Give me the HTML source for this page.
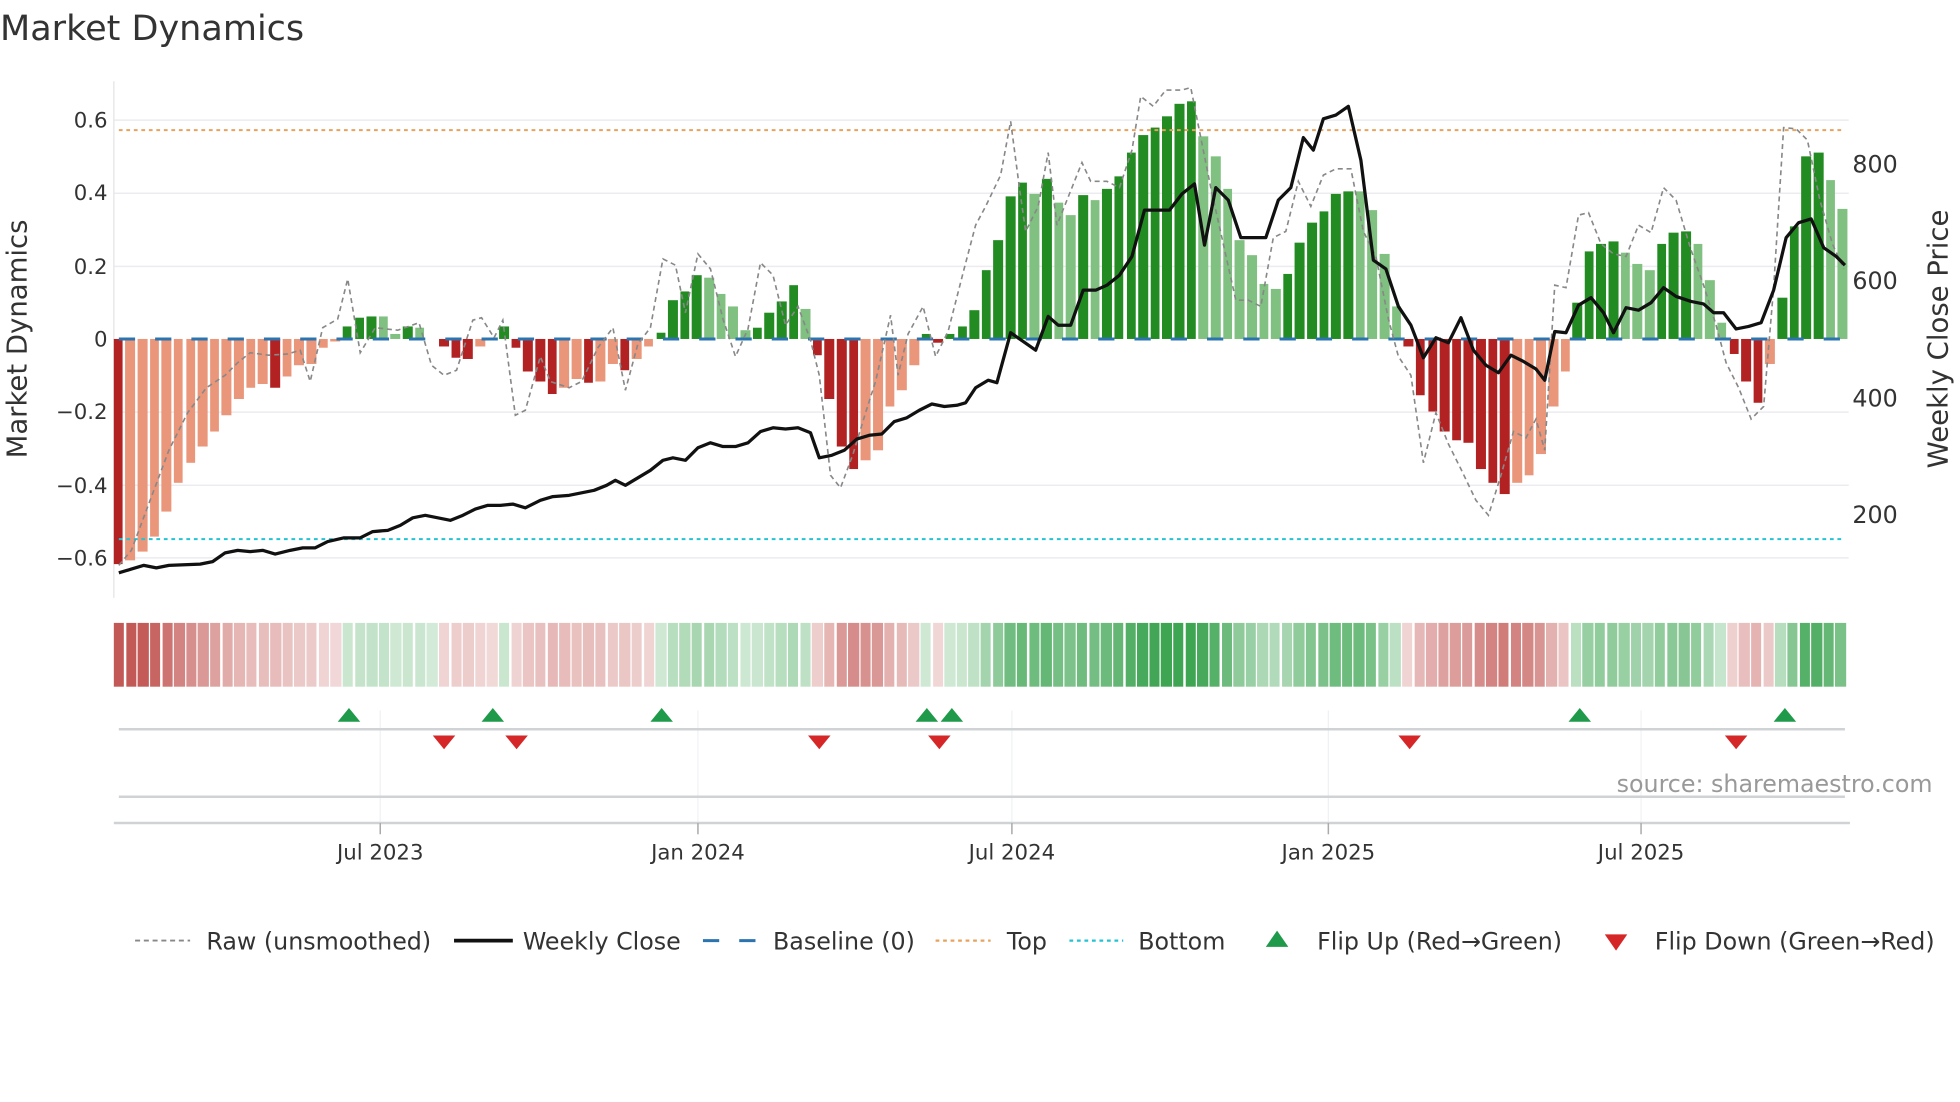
<!DOCTYPE html>
<html><head><meta charset="utf-8"><style>
html,body{margin:0;padding:0;background:#fff;overflow:hidden;width:1960px;height:1102px}
#w{position:absolute;left:0;top:0;width:1567px;height:881px;transform:scale(1.2508);transform-origin:0 0}
svg{position:absolute;left:0;top:0;display:block}
text{font-family:"DejaVu Sans","Liberation Sans",sans-serif;fill:#333}
#bars{position:absolute;left:90.7px;top:0;width:1400px;display:flex;align-items:flex-start}
#bars b{flex:none;display:block;width:7.6px;margin-right:2.047px;height:calc(var(--v)*291.7px)}
#bars b.R,#bars b.r{margin-top:271px}
#bars b.G,#bars b.g{margin-top:calc(271px - var(--v)*291.7px)}
.R{background:#b22222}.r{background:#e9967a}.G{background:#228b22}.g{background:#80c080}
#heat{position:absolute;left:91px;top:498px;width:1400px;height:51px;display:flex}
#heat b{flex:none;display:block;width:8.44px;margin-right:1.2px;height:51px;opacity:min(0.95,calc(0.22 + var(--v)*1.23))}
#heat b.R,#heat b.r{background:rgb(192,80,77)}
#heat b.G,#heat b.g{background:rgb(52,160,74)}
</style></head><body><div id="w">
<svg width="1567" height="881" viewBox="0 0 1567 881">
<text x="0" y="32" font-size="28">Market Dynamics</text>
<g stroke="#ececf0" stroke-width="1.2">
<line x1="91" x2="1478" y1="96" y2="96"/><line x1="91" x2="1478" y1="154.5" y2="154.5"/><line x1="91" x2="1478" y1="213" y2="213"/>
<line x1="91" x2="1478" y1="329.5" y2="329.5"/><line x1="91" x2="1478" y1="388" y2="388"/><line x1="91" x2="1478" y1="446" y2="446"/>
</g>
<line x1="91" x2="91" y1="65" y2="478" stroke="#e4e4e4" stroke-width="1"/>
<g font-size="17" text-anchor="end">
<text x="86" y="102">0.6</text><text x="86" y="160">0.4</text><text x="86" y="219">0.2</text><text x="86" y="277">0</text>
<text x="86" y="335">−0.2</text><text x="86" y="394">−0.4</text><text x="86" y="452">−0.6</text>
</g>
<g font-size="19">
<text x="1481" y="138">800</text><text x="1481" y="231">600</text><text x="1481" y="325">400</text><text x="1481" y="418">200</text>
</g>
<text transform="translate(21,271) rotate(-90)" text-anchor="middle" font-size="22">Market Dynamics</text>
<text transform="translate(1557,271) rotate(-90)" text-anchor="middle" font-size="22">Weekly Close Price</text>
<g stroke="#eef2f4" stroke-width="1">
<line x1="304" x2="304" y1="568" y2="658"/><line x1="558" x2="558" y1="568" y2="658"/><line x1="809" x2="809" y1="568" y2="658"/><line x1="1062" x2="1062" y1="568" y2="658"/><line x1="1312" x2="1312" y1="568" y2="658"/>
</g>
<line x1="95" x2="1475" y1="583" y2="583" stroke="#cfd3d6" stroke-width="2"/>
<line x1="95" x2="1475" y1="637" y2="637" stroke="#cfd3d6" stroke-width="2"/>
<line x1="91" x2="1479" y1="658" y2="658" stroke="#cfd3d6" stroke-width="2"/>
<g stroke="#aaa" stroke-width="1.2">
<line x1="304" x2="304" y1="658" y2="667"/><line x1="558" x2="558" y1="658" y2="667"/><line x1="809" x2="809" y1="658" y2="667"/><line x1="1062" x2="1062" y1="658" y2="667"/><line x1="1312" x2="1312" y1="658" y2="667"/>
</g>
<g font-size="17" text-anchor="middle">
<text x="304" y="687">Jul 2023</text><text x="558" y="687">Jan 2024</text><text x="809" y="687">Jul 2024</text><text x="1062" y="687">Jan 2025</text><text x="1312" y="687">Jul 2025</text>
</g>
<g fill="#1e9a4a"><polygon points="270,577 288,577 279,566"/><polygon points="385,577 403,577 394,566"/><polygon points="520,577 538,577 529,566"/><polygon points="732,577 750,577 741,566"/><polygon points="752,577 770,577 761,566"/><polygon points="1254,577 1272,577 1263,566"/><polygon points="1418,577 1436,577 1427,566"/></g>
<g fill="#d62728"><polygon points="346,588 364,588 355,599"/><polygon points="404,588 422,588 413,599"/><polygon points="646,588 664,588 655,599"/><polygon points="742,588 760,588 751,599"/><polygon points="1118,588 1136,588 1127,599"/><polygon points="1379,588 1397,588 1388,599"/></g>
<text x="1545" y="633" text-anchor="end" font-size="19" style="fill:#999">source: sharemaestro.com</text>
<g font-size="19">
<line x1="108" x2="152" y1="752" y2="752" stroke="#888" stroke-width="1.5" stroke-dasharray="4,3"/>
<text x="165" y="759">Raw (unsmoothed)</text>
<line x1="363" x2="410" y1="752" y2="752" stroke="#111" stroke-width="3"/>
<text x="418" y="759">Weekly Close</text>
<line x1="562" x2="605" y1="752" y2="752" stroke="#2b74b0" stroke-width="2.4" stroke-dasharray="13,16"/>
<text x="618" y="759">Baseline (0)</text>
<line x1="748" x2="792" y1="752" y2="752" stroke="#e8a25e" stroke-width="1.8" stroke-dasharray="3,3"/>
<text x="805" y="759">Top</text>
<line x1="855" x2="898" y1="752" y2="752" stroke="#22c3d3" stroke-width="1.8" stroke-dasharray="3,3"/>
<text x="910" y="759">Bottom</text>
<polygon points="1012,757 1030,757 1021,744" fill="#1e9a4a"/>
<text x="1053" y="759">Flip Up (Red→Green)</text>
<polygon points="1283,747 1301,747 1292,760" fill="#d62728"/>
<text x="1323" y="759">Flip Down (Green→Red)</text>
</g>
</svg>
<div id="bars"><b class="R" style="--v:.617"></b><b class="r" style="--v:.608"></b><b class="r" style="--v:.584"></b><b class="r" style="--v:.54"></b><b class="r" style="--v:.473"></b><b class="r" style="--v:.395"></b><b class="r" style="--v:.34"></b><b class="r" style="--v:.296"></b><b class="r" style="--v:.254"></b><b class="r" style="--v:.209"></b><b class="r" style="--v:.163"></b><b class="r" style="--v:.134"></b><b class="r" style="--v:.124"></b><b class="R" style="--v:.134"></b><b class="r" style="--v:.102"></b><b class="r" style="--v:.072"></b><b class="r" style="--v:.067"></b><b class="r" style="--v:.023"></b><b class="r" style="--v:.007"></b><b class="G" style="--v:.035"></b><b class="G" style="--v:.057"></b><b class="G" style="--v:.062"></b><b class="g" style="--v:.06"></b><b class="g" style="--v:.015"></b><b class="G" style="--v:.035"></b><b class="g" style="--v:.03"></b><b class="g" style="--v:0"></b><b class="R" style="--v:.022"></b><b class="R" style="--v:.05"></b><b class="R" style="--v:.055"></b><b class="r" style="--v:.02"></b><b class="r" style="--v:0"></b><b class="G" style="--v:.035"></b><b class="R" style="--v:.025"></b><b class="R" style="--v:.09"></b><b class="R" style="--v:.115"></b><b class="R" style="--v:.15"></b><b class="r" style="--v:.135"></b><b class="r" style="--v:.11"></b><b class="R" style="--v:.12"></b><b class="r" style="--v:.115"></b><b class="r" style="--v:.07"></b><b class="R" style="--v:.085"></b><b class="r" style="--v:.055"></b><b class="r" style="--v:.02"></b><b class="G" style="--v:.017"></b><b class="G" style="--v:.105"></b><b class="G" style="--v:.13"></b><b class="G" style="--v:.175"></b><b class="g" style="--v:.167"></b><b class="g" style="--v:.123"></b><b class="g" style="--v:.09"></b><b class="g" style="--v:.025"></b><b class="G" style="--v:.03"></b><b class="G" style="--v:.072"></b><b class="G" style="--v:.104"></b><b class="G" style="--v:.147"></b><b class="g" style="--v:.082"></b><b class="R" style="--v:.046"></b><b class="R" style="--v:.163"></b><b class="R" style="--v:.296"></b><b class="R" style="--v:.358"></b><b class="r" style="--v:.334"></b><b class="r" style="--v:.306"></b><b class="r" style="--v:.184"></b><b class="r" style="--v:.142"></b><b class="r" style="--v:.072"></b><b class="G" style="--v:.015"></b><b class="R" style="--v:.01"></b><b class="G" style="--v:.015"></b><b class="G" style="--v:.035"></b><b class="G" style="--v:.08"></b><b class="G" style="--v:.19"></b><b class="G" style="--v:.27"></b><b class="G" style="--v:.39"></b><b class="G" style="--v:.427"></b><b class="g" style="--v:.398"></b><b class="G" style="--v:.44"></b><b class="g" style="--v:.373"></b><b class="g" style="--v:.34"></b><b class="G" style="--v:.395"></b><b class="g" style="--v:.38"></b><b class="G" style="--v:.41"></b><b class="G" style="--v:.444"></b><b class="G" style="--v:.51"></b><b class="G" style="--v:.558"></b><b class="G" style="--v:.58"></b><b class="G" style="--v:.61"></b><b class="G" style="--v:.644"></b><b class="G" style="--v:.651"></b><b class="g" style="--v:.556"></b><b class="g" style="--v:.5"></b><b class="g" style="--v:.41"></b><b class="g" style="--v:.27"></b><b class="g" style="--v:.23"></b><b class="g" style="--v:.152"></b><b class="g" style="--v:.136"></b><b class="G" style="--v:.177"></b><b class="G" style="--v:.265"></b><b class="G" style="--v:.32"></b><b class="G" style="--v:.35"></b><b class="G" style="--v:.397"></b><b class="G" style="--v:.405"></b><b class="g" style="--v:.405"></b><b class="g" style="--v:.352"></b><b class="g" style="--v:.234"></b><b class="g" style="--v:.09"></b><b class="R" style="--v:.02"></b><b class="R" style="--v:.155"></b><b class="R" style="--v:.2"></b><b class="R" style="--v:.254"></b><b class="R" style="--v:.278"></b><b class="R" style="--v:.285"></b><b class="R" style="--v:.358"></b><b class="R" style="--v:.395"></b><b class="R" style="--v:.426"></b><b class="r" style="--v:.395"></b><b class="r" style="--v:.374"></b><b class="r" style="--v:.317"></b><b class="r" style="--v:.186"></b><b class="r" style="--v:.0875"></b><b class="G" style="--v:.1"></b><b class="G" style="--v:.24"></b><b class="G" style="--v:.26"></b><b class="G" style="--v:.267"></b><b class="g" style="--v:.237"></b><b class="g" style="--v:.204"></b><b class="g" style="--v:.19"></b><b class="G" style="--v:.26"></b><b class="G" style="--v:.29"></b><b class="G" style="--v:.295"></b><b class="g" style="--v:.26"></b><b class="g" style="--v:.16"></b><b class="g" style="--v:.046"></b><b class="R" style="--v:.04"></b><b class="R" style="--v:.117"></b><b class="R" style="--v:.174"></b><b class="r" style="--v:.07"></b><b class="G" style="--v:.113"></b><b class="G" style="--v:.31"></b><b class="G" style="--v:.5"></b><b class="G" style="--v:.51"></b><b class="g" style="--v:.436"></b><b class="g" style="--v:.355"></b></div>
<div id="heat"><b class="R" style="--v:.617"></b><b class="r" style="--v:.608"></b><b class="r" style="--v:.584"></b><b class="r" style="--v:.54"></b><b class="r" style="--v:.473"></b><b class="r" style="--v:.395"></b><b class="r" style="--v:.34"></b><b class="r" style="--v:.296"></b><b class="r" style="--v:.254"></b><b class="r" style="--v:.209"></b><b class="r" style="--v:.163"></b><b class="r" style="--v:.134"></b><b class="r" style="--v:.124"></b><b class="R" style="--v:.134"></b><b class="r" style="--v:.102"></b><b class="r" style="--v:.072"></b><b class="r" style="--v:.067"></b><b class="r" style="--v:.023"></b><b class="r" style="--v:.007"></b><b class="G" style="--v:.035"></b><b class="G" style="--v:.057"></b><b class="G" style="--v:.062"></b><b class="g" style="--v:.06"></b><b class="g" style="--v:.015"></b><b class="G" style="--v:.035"></b><b class="g" style="--v:.03"></b><b class="g" style="--v:0"></b><b class="R" style="--v:.022"></b><b class="R" style="--v:.05"></b><b class="R" style="--v:.055"></b><b class="r" style="--v:.02"></b><b class="r" style="--v:0"></b><b class="G" style="--v:.035"></b><b class="R" style="--v:.025"></b><b class="R" style="--v:.09"></b><b class="R" style="--v:.115"></b><b class="R" style="--v:.15"></b><b class="r" style="--v:.135"></b><b class="r" style="--v:.11"></b><b class="R" style="--v:.12"></b><b class="r" style="--v:.115"></b><b class="r" style="--v:.07"></b><b class="R" style="--v:.085"></b><b class="r" style="--v:.055"></b><b class="r" style="--v:.02"></b><b class="G" style="--v:.017"></b><b class="G" style="--v:.105"></b><b class="G" style="--v:.13"></b><b class="G" style="--v:.175"></b><b class="g" style="--v:.167"></b><b class="g" style="--v:.123"></b><b class="g" style="--v:.09"></b><b class="g" style="--v:.025"></b><b class="G" style="--v:.03"></b><b class="G" style="--v:.072"></b><b class="G" style="--v:.104"></b><b class="G" style="--v:.147"></b><b class="g" style="--v:.082"></b><b class="R" style="--v:.046"></b><b class="R" style="--v:.163"></b><b class="R" style="--v:.296"></b><b class="R" style="--v:.358"></b><b class="r" style="--v:.334"></b><b class="r" style="--v:.306"></b><b class="r" style="--v:.184"></b><b class="r" style="--v:.142"></b><b class="r" style="--v:.072"></b><b class="G" style="--v:.015"></b><b class="R" style="--v:.01"></b><b class="G" style="--v:.015"></b><b class="G" style="--v:.035"></b><b class="G" style="--v:.08"></b><b class="G" style="--v:.19"></b><b class="G" style="--v:.27"></b><b class="G" style="--v:.39"></b><b class="G" style="--v:.427"></b><b class="g" style="--v:.398"></b><b class="G" style="--v:.44"></b><b class="g" style="--v:.373"></b><b class="g" style="--v:.34"></b><b class="G" style="--v:.395"></b><b class="g" style="--v:.38"></b><b class="G" style="--v:.41"></b><b class="G" style="--v:.444"></b><b class="G" style="--v:.51"></b><b class="G" style="--v:.558"></b><b class="G" style="--v:.58"></b><b class="G" style="--v:.61"></b><b class="G" style="--v:.644"></b><b class="G" style="--v:.651"></b><b class="g" style="--v:.556"></b><b class="g" style="--v:.5"></b><b class="g" style="--v:.41"></b><b class="g" style="--v:.27"></b><b class="g" style="--v:.23"></b><b class="g" style="--v:.152"></b><b class="g" style="--v:.136"></b><b class="G" style="--v:.177"></b><b class="G" style="--v:.265"></b><b class="G" style="--v:.32"></b><b class="G" style="--v:.35"></b><b class="G" style="--v:.397"></b><b class="G" style="--v:.405"></b><b class="g" style="--v:.405"></b><b class="g" style="--v:.352"></b><b class="g" style="--v:.234"></b><b class="g" style="--v:.09"></b><b class="R" style="--v:.02"></b><b class="R" style="--v:.155"></b><b class="R" style="--v:.2"></b><b class="R" style="--v:.254"></b><b class="R" style="--v:.278"></b><b class="R" style="--v:.285"></b><b class="R" style="--v:.358"></b><b class="R" style="--v:.395"></b><b class="R" style="--v:.426"></b><b class="r" style="--v:.395"></b><b class="r" style="--v:.374"></b><b class="r" style="--v:.317"></b><b class="r" style="--v:.186"></b><b class="r" style="--v:.0875"></b><b class="G" style="--v:.1"></b><b class="G" style="--v:.24"></b><b class="G" style="--v:.26"></b><b class="G" style="--v:.267"></b><b class="g" style="--v:.237"></b><b class="g" style="--v:.204"></b><b class="g" style="--v:.19"></b><b class="G" style="--v:.26"></b><b class="G" style="--v:.29"></b><b class="G" style="--v:.295"></b><b class="g" style="--v:.26"></b><b class="g" style="--v:.16"></b><b class="g" style="--v:.046"></b><b class="R" style="--v:.04"></b><b class="R" style="--v:.117"></b><b class="R" style="--v:.174"></b><b class="r" style="--v:.07"></b><b class="G" style="--v:.113"></b><b class="G" style="--v:.31"></b><b class="G" style="--v:.5"></b><b class="G" style="--v:.51"></b><b class="g" style="--v:.436"></b><b class="g" style="--v:.355"></b></div>
<svg width="1567" height="881" viewBox="0 0 1567 881">
<line x1="95" x2="1475" y1="104" y2="104" stroke="#e8a25e" stroke-width="1.6" stroke-dasharray="3,3"/>
<line x1="95" x2="1475" y1="431" y2="431" stroke="#22c3d3" stroke-width="1.6" stroke-dasharray="3,3"/>
<line x1="95" x2="1475" y1="271" y2="271" stroke="#2b74b0" stroke-width="2.4" stroke-dasharray="13,16"/>
<polyline fill="none" stroke="#888" stroke-width="1.3" stroke-dasharray="4,3" points="95,452 105,440 120,400 135,360 150,330 165,310 180,300 190,290 200,282 215,284 230,283 240,280 248,305 258,262 270,255 278,223 288,282 300,262 318,264 335,258 345,292 355,300 365,296 378,256 385,254 395,270 402,256 412,332 420,328 432,285 440,305 455,310 465,305 478,278 490,262 500,312 510,275 520,262 530,207 540,212 548,250 558,203 568,215 578,255 588,285 598,263 608,210 618,220 628,260 638,245 648,272 655,300 664,380 672,390 682,363 692,330 700,305 712,252 718,300 726,267 738,245 748,285 758,265 770,218 780,180 788,165 800,140 808,97 815,150 820,185 830,165 838,122 845,180 855,155 865,130 872,145 885,145 895,150 905,120 912,77 922,85 932,72 945,72 952,70 960,110 968,150 978,195 988,240 998,240 1008,245 1018,190 1028,185 1038,145 1048,165 1058,140 1068,135 1080,135 1090,185 1100,205 1110,255 1118,285 1128,300 1138,370 1148,330 1158,355 1168,375 1180,400 1190,412 1200,380 1210,345 1220,350 1228,335 1235,360 1243,228 1252,230 1262,172 1270,170 1280,195 1290,203 1300,205 1310,180 1320,186 1330,150 1340,160 1352,200 1362,228 1372,260 1380,290 1390,310 1400,335 1410,325 1418,230 1426,102 1436,103 1445,112 1455,160 1465,195 1474,215"/>
<polyline fill="none" stroke="#111" stroke-width="2.6" stroke-linejoin="round" points="95,458 105,455 115,452 125,454 135,452 160,451 170,449 180,442 190,440 200,441 210,440 220,443 232,440 242,438 252,438 262,433 275,430 288,430 298,425 310,424 320,420 330,414 340,412 350,414 360,416 370,412 380,407 390,404 400,404 410,403 420,406 432,400 442,397 455,396 465,394 475,392 485,388 492,384 500,388 510,382 520,376 530,368 538,366 548,368 558,358 568,354 578,357 588,357 598,354 608,345 618,342 628,343 638,342 648,346 655,366 665,364 675,360 685,351 695,348 705,347 715,337 725,334 735,328 745,323 755,325 765,324 772,322 780,310 790,304 797,306 808,266 818,273 828,280 838,253 846,260 856,260 866,232 876,232 885,228 895,220 905,205 915,168 925,168 935,168 945,155 955,147 963,196 972,150 982,160 992,190 1002,190 1012,190 1022,160 1032,150 1042,110 1050,120 1058,95 1068,92 1078,85 1088,128 1098,208 1108,215 1118,245 1128,260 1138,286 1148,270 1158,274 1168,254 1178,280 1188,292 1198,298 1208,284 1218,289 1228,295 1235,304 1243,265 1252,266 1262,244 1272,238 1282,250 1290,266 1300,246 1310,248 1320,242 1330,230 1340,237 1352,241 1362,243 1370,250 1378,250 1388,263 1398,261 1408,258 1418,232 1428,190 1438,178 1448,175 1458,198 1468,205 1475,212"/>
</svg>
</div></body></html>
